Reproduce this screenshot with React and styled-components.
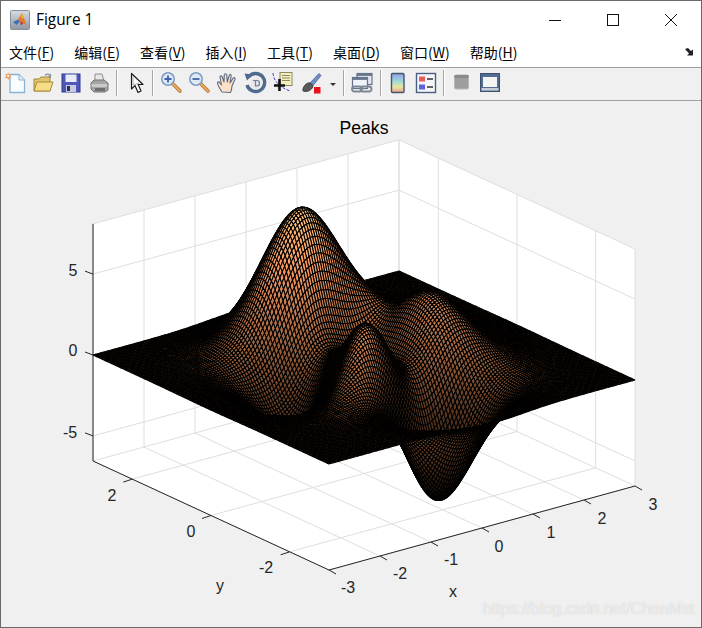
import React from 'react';
import styled, { createGlobalStyle } from 'styled-components';

const GlobalStyle = createGlobalStyle`
  html, body { margin: 0; padding: 0; background: #fff; }
`;

const Window = styled.div`
  position: relative;
  width: 702px;
  height: 628px;
  box-sizing: border-box;
  border: 1px solid #6a6a6a;
  display: flex;
  flex-direction: column;
  background: #f0f0f0;
  overflow: hidden;
`;

const TitleBar = styled.div`
  height: 37px;
  background: #fff;
  display: flex;
  align-items: center;
  padding: 0 1px 0 9px;
  flex: none;
`;

const WindowTitle = styled.div`
  margin-left: 6px;
  font: 15.4px "Open Sans", "Noto Sans", sans-serif;
  color: #000;
  flex: 1;
`;

const WindowButton = styled.div`
  width: 58px;
  height: 37px;
  display: flex;
  align-items: center;
  justify-content: center;
`;

const MenuBar = styled.div`
  height: 29px;
  box-sizing: content-box;
  background: #fff;
  border-bottom: 1px solid #a0a0a0;
  display: flex;
  align-items: flex-start;
  padding-left: 8px;
  flex: none;
`;

const MenuItem = styled.div`
  font: 14px/28px "Noto Sans CJK SC", "Noto Sans", sans-serif;
  color: #000;
  margin-right: 20px;
  white-space: nowrap;
  u { text-underline-offset: 2px; }
`;

const DockArrow = styled.svg`
  margin: 10px 6px 0 auto;
`;

const ToolBar = styled.div`
  height: 32px;
  background: #f0f0f0;
  border-bottom: 1px solid #a0a0a0;
  display: flex;
  align-items: center;
  flex: none;
`;

const Tool = styled.div`
  width: 28px;
  height: 24px;
  margin-top: -3px;
  display: flex;
  justify-content: center;
  flex: none;
`;

const Separator = styled.div`
  width: 1px;
  height: 26px;
  margin: -2px ${p => p.$right}px 0 ${p => p.$left}px;
  background: #a6a6a6;
  box-shadow: 1px 0 0 #fff;
  flex: none;
`;

const DropArrow = styled.div`
  width: 0;
  height: 0;
  margin-left: 5px;
  border-left: 3px solid transparent;
  border-right: 3px solid transparent;
  border-top: 3px solid #333;
  flex: none;
`;

const FigureArea = styled.div`
  flex: 1;
  background: #f0f0f0;
  line-height: 0;
`;

const Watermark = styled.div`
  position: absolute;
  left: 482px;
  bottom: 9px;
  font: 16px "Liberation Sans", Arial, sans-serif;
  color: rgba(255, 255, 255, 0.7);
  text-shadow: 0 0 1px rgba(170, 170, 170, 0.7);
  white-space: nowrap;
`;

const Icon = styled.span`
  display: block;
  line-height: 0;
`;

const menus = [
  ['文件', 'F'], ['编辑', 'E'], ['查看', 'V'], ['插入', 'I'],
  ['工具', 'T'], ['桌面', 'D'], ['窗口', 'W'], ['帮助', 'H'],
];

// projection of the 3d axes box onto page pixels
const project = (x, y, z) => [
  364 + 51 * x - 39.33 * y,
  367.5 - 14 * x - 18.17 * y - 16.18 * z,
];

const peaks = (x, y) =>
  3 * (1 - x) ** 2 * Math.exp(-x * x - (y + 1) ** 2) -
  10 * (x / 5 - x ** 3 - y ** 5) * Math.exp(-x * x - y * y) -
  (1 / 3) * Math.exp(-((x + 1) ** 2) - y * y);

const copper = z => {
  const v = Math.round(((z + 6.55) / 14.65) * 63) / 63;
  const r = Math.min(1, 1.25 * v);
  return `rgb(${Math.round(r * 255)},${Math.round(0.7812 * v * 255)},${Math.round(0.4975 * v * 255)})`;
};

const N = 130;
const grid = i => -3 + (6 * i) / (N - 1);

const buildSurface = () => {
  const quads = [];
  for (let i = N - 2; i >= 0; i--) {
    for (let j = N - 2; j >= 0; j--) {
      const corners = [[i, j], [i + 1, j], [i + 1, j + 1], [i, j + 1]].map(([a, b]) => {
        const x = grid(a);
        const y = grid(b);
        return [x, y, peaks(x, y)];
      });
      const d = 'M' + corners.map(c => project(...c).map(n => n.toFixed(2)).join(' ')).join('L') + 'Z';
      quads.push({ d, fill: copper(corners[0][2]) });
    }
  }
  return quads;
};

const surface = buildSurface();

const pt = (x, y, z) => project(x, y, z).map(n => n.toFixed(1)).join(' ');
const Z0 = -6.55;
const Z1 = 8.1;
const GRID = '#dedede';
const AXIS = '#262626';

const gridLines = () => {
  const lines = [];
  [-3, -2, -1, 0, 1, 2, 3].forEach(x => {
    lines.push(`M${pt(x, -3, Z0)}L${pt(x, 3, Z0)}L${pt(x, 3, Z1)}`);
  });
  [-3, -2, 0, 2, 3].forEach(y => {
    lines.push(`M${pt(-3, y, Z0)}L${pt(3, y, Z0)}L${pt(3, y, Z1)}`);
  });
  [-5, 0, 5, Z1].forEach(z => {
    lines.push(`M${pt(-3, 3, z)}L${pt(3, 3, z)}L${pt(3, -3, z)}`);
  });
  return lines;
};

const tick = (a, dx, dy) => {
  const [x, y] = a;
  return `M${x.toFixed(1)} ${y.toFixed(1)}l${dx} ${dy}`;
};

const labels = [
  ['5', 73, 276], ['0', 73, 356], ['-5', 70, 438],
  ['2', 112, 501], ['0', 191, 537], ['-2', 266, 573],
  ['-3', 348, 593], ['-2', 400, 579], ['-1', 451, 565], ['0', 499, 552],
  ['1', 551, 538], ['2', 602, 524], ['3', 653, 510],
  ['x', 453, 597], ['y', 220, 591],
];

const PeaksPlot = () => (
  <svg width="700" height="526" viewBox="1 101 700 526">
    <path
      fill="#fff"
      d={`M${pt(-3, 3, Z1)}L${pt(3, 3, Z1)}L${pt(3, -3, Z1)}L${pt(3, -3, Z0)}L${pt(-3, -3, Z0)}L${pt(-3, 3, Z0)}Z`}
    />
    <path d={gridLines().join('')} fill="none" stroke={GRID} strokeWidth="1" />
    <path
      d={`M${pt(-3, 3, Z1)}L${pt(-3, 3, Z0)}L${pt(-3, -3, Z0)}L${pt(3, -3, Z0)}`}
      fill="none"
      stroke={AXIS}
      strokeWidth="1"
    />
    <path
      fill="none"
      stroke={AXIS}
      strokeWidth="1"
      d={
        [-5, 0, 5].map(z => tick(project(-3, 3, z), -8, -3)).join('') +
        [-2, 0, 2].map(y => tick(project(-3, y, Z0), -9, 3)).join('') +
        [-3, -2, -1, 0, 1, 2, 3].map(x => tick(project(x, -3, Z0), 7, 4)).join('')
      }
    />
    <g stroke="#000" strokeWidth="1.05" strokeLinejoin="bevel">
      {surface.map((q, i) => (
        <path key={i} d={q.d} fill={q.fill} />
      ))}
    </g>
    <g fontFamily='"Liberation Sans", Arial, sans-serif' fontSize="16" fill="#262626" textAnchor="middle">
      {labels.map(([t, x, y]) => (
        <text key={`${t}${x}`} x={x} y={y}>{t}</text>
      ))}
      <text x="364" y="134" fill="#000" fontSize="17.6">Peaks</text>
    </g>
  </svg>
);

const MatlabLogo = () => (
  <svg width="20" height="20" viewBox="0 0 20 20">
    <defs>
      <linearGradient id="logoBg" x1="0" y1="0" x2="0" y2="1">
        <stop offset="0" stopColor="#d8dce2" />
        <stop offset="1" stopColor="#8f98a4" />
      </linearGradient>
    </defs>
    <rect x="0.5" y="0.5" width="19" height="19" rx="1" fill="url(#logoBg)" stroke="#8a8f96" />
    <path d="M3 12 L8 9.5 L10 11.5 L6.5 15 Z" fill="#3a6fb5" />
    <path d="M8 9.5 L12 3 L17 16 L13.5 13 L10 11.5 Z" fill="#e8762a" />
    <path d="M12 3 L14 8 L11 8.5 Z" fill="#f5b03a" />
    <path d="M10 11.5 L13.5 13 L11 15.5 Z" fill="#b5361e" />
  </svg>
);

const NewIcon = () => (
  <svg width="24" height="24" viewBox="0 0 24 24">
    <path d="M7 3.5 H16 L21.5 9 V21.5 H7 Z" fill="#fafdff" stroke="#86b4d8" strokeWidth="1.3" />
    <path d="M16 3.5 V9 H21.5" fill="#dcecf8" stroke="#86b4d8" />
    <path d="M5 1 L6 3.4 L8.4 2.6 L7 5 L8.8 6.6 L6.3 6.8 L5.5 9 L4.2 7 L1.8 7.2 L3.2 5 L1.8 3 L4.2 3.4 Z" fill="#f0965a" />
    <circle cx="5.2" cy="5" r="1.2" fill="#fff3d8" />
  </svg>
);

const OpenIcon = () => (
  <svg width="24" height="24" viewBox="0 0 24 24">
    <path d="M14 4 Q18 2 20 5" fill="none" stroke="#8d99a6" strokeWidth="1.6" />
    <path d="M20 2.5 V7 H16" fill="#8d99a6" />
    <path d="M3 20 V8 H8 L10 6 H19 V20 Z" fill="#e3c46c" stroke="#a08840" />
    <path d="M3 20 L6 11 H22 L19 20 Z" fill="#f7dd86" stroke="#a58a3a" />
  </svg>
);

const SaveIcon = () => (
  <svg width="24" height="24" viewBox="0 0 24 24">
    <rect x="3" y="3" width="18" height="18" fill="#4f58b8" stroke="#2e3a8c" />
    <rect x="6.5" y="3.5" width="11" height="7.5" fill="#e9ebf8" />
    <rect x="7" y="14" width="10" height="7" fill="#c7cbe0" />
    <rect x="8" y="15" width="3" height="5" fill="#2a2f5c" />
  </svg>
);

const PrintIcon = () => (
  <svg width="24" height="24" viewBox="0 0 24 24">
    <path d="M8 3 H15 L17 10 H8 Z" fill="#e8e8e8" stroke="#8e8e8e" />
    <path d="M4 12 L7 9 H17 L21 12 V19 L18 21 H7 L4 18 Z" fill="#a4a4a4" stroke="#747474" />
    <path d="M4.5 13 H20 V16 H4.5 Z" fill="#c9c9c9" />
    <path d="M8 17 H18 V20 H8 Z" fill="#6e6e6e" />
  </svg>
);

const CursorIcon = () => (
  <svg width="24" height="24" viewBox="0 0 24 24">
    <path d="M6.5 2.5 L6.5 18 L10 14.6 L13 21.5 L16 20 L13.2 13.5 L18 13.5 Z" fill="#fff" stroke="#1c1c1c" strokeWidth="1.2" strokeLinejoin="round" />
    <path d="M8 5 L8 14 L14 12" fill="none" stroke="#9a9a9a" strokeWidth="0.8" />
  </svg>
);

const Lens = ({ children }) => (
  <svg width="24" height="24" viewBox="0 0 24 24">
    <path d="M13.5 12.5 L21 20" stroke="#b8742c" strokeWidth="3.6" strokeLinecap="round" />
    <path d="M13.5 12.5 L21 20" stroke="#eaa860" strokeWidth="2" strokeLinecap="round" />
    <circle cx="9" cy="8" r="6.2" fill="#dfeaf6" stroke="#7f9cc2" strokeWidth="1.6" />
    {children}
  </svg>
);

const HandIcon = () => (
  <svg width="24" height="24" viewBox="0 0 24 24">
    <path
      d="M7 21 C5 18 3 15 2.5 12 C2.5 10.5 4 10.5 5 12 L6.5 14 L5 6 C5 4.5 7 4.5 7.3 6 L9 11 L9.3 3.8 C9.5 2.3 11.5 2.3 11.7 3.8 L12.3 11 L14.2 4.5 C14.6 3 16.4 3.4 16.2 5 L15 12 L18.2 7 C19 6 20.6 6.8 20 8.3 L17 15 C16.5 18 16.5 20 15.5 21.5 Z"
      fill="#fbe0c8"
      stroke="#5d6b80"
      strokeWidth="1.1"
      strokeLinejoin="round"
    />
  </svg>
);

const RotateIcon = () => (
  <svg width="24" height="24" viewBox="0 0 24 24">
    <path d="M5.5 6 A9 9 0 1 1 4 14" fill="none" stroke="#4e6a8e" strokeWidth="3.4" />
    <path d="M1.5 2.5 L10 3.5 L4 9.5 Z" fill="#4e6a8e" />
    <circle cx="13" cy="12" r="5.8" fill="#e8e8e8" />
    <path d="M10 9.5 H14 Q16.5 9.5 16.5 12 Q16.5 15 14 15 H12.5 V10" fill="none" stroke="#6c7f98" strokeWidth="1.2" />
  </svg>
);

const DataTipIcon = () => (
  <svg width="24" height="24" viewBox="0 0 24 24">
    <path d="M2 2 Q3 14 19 20" fill="none" stroke="#3b3bd0" strokeWidth="1" strokeDasharray="3 1.5" />
    <rect x="9" y="1.5" width="12" height="13" fill="#f4eeb8" stroke="#8a8a6a" />
    <path d="M11 4.5 H19 M11 7 H19 M11 9.5 H19" stroke="#8a8a6a" />
    <path d="M8.5 8 V20 M3 14.5 H14" stroke="#101010" strokeWidth="2.6" />
  </svg>
);

const BrushIcon = () => (
  <svg width="24" height="24" viewBox="0 0 24 24">
    <path d="M11 12 L20 2.5 L22 4.5 L14 14.5 Z" fill="#6f8fc8" stroke="#4b5f8a" strokeWidth="0.8" />
    <path d="M4 20 C3 16 8 11 11 12 L14 14.5 C14 18 9 22 4 20 Z" fill="#5a5a5a" stroke="#333" strokeWidth="0.8" />
    <rect x="15" y="16" width="6.5" height="6.5" fill="#e8111a" />
  </svg>
);

const LinkIcon = () => (
  <svg width="24" height="24" viewBox="0 0 24 24">
    <rect x="7" y="2.5" width="15" height="11" fill="#e4e8ee" stroke="#66758e" strokeWidth="1.2" />
    <rect x="7" y="2.5" width="15" height="2.4" fill="#66758e" />
    <rect x="2.5" y="6.5" width="15" height="11" fill="#eef3fa" stroke="#66758e" strokeWidth="1.2" />
    <rect x="2.5" y="6.5" width="15" height="2.4" fill="#66758e" />
    <rect x="2" y="15.5" width="10" height="5" rx="2.5" fill="none" stroke="#7c8794" strokeWidth="1.8" />
    <rect x="10.5" y="15.5" width="11" height="5" rx="2.5" fill="none" stroke="#7c8794" strokeWidth="1.8" />
  </svg>
);

const ColorbarIcon = () => (
  <svg width="24" height="24" viewBox="0 0 24 24">
    <defs>
      <linearGradient id="barFill" x1="0" y1="0" x2="0" y2="1">
        <stop offset="0" stopColor="#8f9de8" />
        <stop offset="0.4" stopColor="#9ed8d8" />
        <stop offset="0.7" stopColor="#e6e8a0" />
        <stop offset="1" stopColor="#eda08c" />
      </linearGradient>
    </defs>
    <rect x="5.5" y="2.5" width="12.5" height="19" rx="1" fill="url(#barFill)" stroke="#46546e" strokeWidth="1.4" />
  </svg>
);

const LegendIcon = () => (
  <svg width="24" height="24" viewBox="0 0 24 24">
    <rect x="2.5" y="2.5" width="19" height="19" fill="#f4f6fa" stroke="#4c5f80" strokeWidth="1.4" />
    <rect x="5" y="5.5" width="6" height="5" fill="#ec5a5a" />
    <rect x="5" y="13.5" width="6" height="5" fill="#5a62e0" />
    <path d="M13 8 H19 M13 16 H19" stroke="#333" strokeWidth="1.6" />
  </svg>
);

const HideToolsIcon = () => (
  <svg width="24" height="24" viewBox="0 0 24 24">
    <rect x="4.5" y="4" width="14" height="14" rx="1.5" fill="#9e9e9e" stroke="#b8b8b8" />
    <rect x="4.5" y="4" width="14" height="3" fill="#8a8a8a" />
  </svg>
);

const ShowToolsIcon = () => (
  <svg width="24" height="24" viewBox="0 0 24 24">
    <rect x="2.5" y="2.5" width="19" height="18" fill="#536c92" stroke="#3c4f70" />
    <rect x="5" y="6" width="14" height="10" fill="#f4f4f4" />
    <rect x="3.5" y="17" width="17" height="2.6" fill="#c4ccd6" />
  </svg>
);

const toolsA = [NewIcon, OpenIcon, SaveIcon, PrintIcon];
const toolsB = [HandIcon, RotateIcon, DataTipIcon, BrushIcon];

const renderTool = (Glyph, key) => (
  <Tool key={key}>
    <Icon><Glyph /></Icon>
  </Tool>
);

export default function App() {
  return (
    <>
      <GlobalStyle />
      <Window>
        <TitleBar>
          <MatlabLogo />
          <WindowTitle>Figure 1</WindowTitle>
          <WindowButton>
            <svg width="14" height="14" viewBox="0 0 14 14">
              <path d="M1 7.5 H13" stroke="#111" />
            </svg>
          </WindowButton>
          <WindowButton>
            <svg width="14" height="14" viewBox="0 0 14 14">
              <rect x="1.5" y="1.5" width="11" height="11" fill="none" stroke="#111" />
            </svg>
          </WindowButton>
          <WindowButton>
            <svg width="14" height="14" viewBox="0 0 14 14">
              <path d="M1 1 L13 13 M13 1 L1 13" stroke="#111" />
            </svg>
          </WindowButton>
        </TitleBar>
        <MenuBar>
          {menus.map(([label, key]) => (
            <MenuItem key={key}>
              {label}(<u>{key}</u>)
            </MenuItem>
          ))}
          <DockArrow width="10" height="8" viewBox="0 0 10 8">
            <path d="M0 1 L3 0 L6 3 L8 1.5 V7.5 H2 L4 5.5 Z" fill="#222" />
          </DockArrow>
        </MenuBar>
        <ToolBar>
          {toolsA.map((G, i) => renderTool(G, `a${i}`))}
          <Separator $left={3} $right={6} />
          {renderTool(CursorIcon, 'cursor')}
          <Separator $left={1} $right={4} />
          <Tool>
            <Icon>
              <Lens>
                <path d="M5.5 8 H12.5 M9 4.5 V11.5" stroke="#3a62a8" strokeWidth="1.8" />
              </Lens>
            </Icon>
          </Tool>
          <Tool>
            <Icon>
              <Lens>
                <path d="M5.5 8 H12.5" stroke="#3a62a8" strokeWidth="1.8" />
              </Lens>
            </Icon>
          </Tool>
          {toolsB.map((G, i) => renderTool(G, `b${i}`))}
          <DropArrow />
          <Separator $left={7} $right={4} />
          {renderTool(LinkIcon, 'link')}
          <Separator $left={4} $right={3} />
          {renderTool(ColorbarIcon, 'colorbar')}
          {renderTool(LegendIcon, 'legend')}
          <Separator $left={3} $right={4} />
          {renderTool(HideToolsIcon, 'hide')}
          {renderTool(ShowToolsIcon, 'show')}
        </ToolBar>
        <FigureArea>
          <PeaksPlot />
        </FigureArea>
        <Watermark>https://blog.csdn.net/ChenMst</Watermark>
      </Window>
    </>
  );
}
